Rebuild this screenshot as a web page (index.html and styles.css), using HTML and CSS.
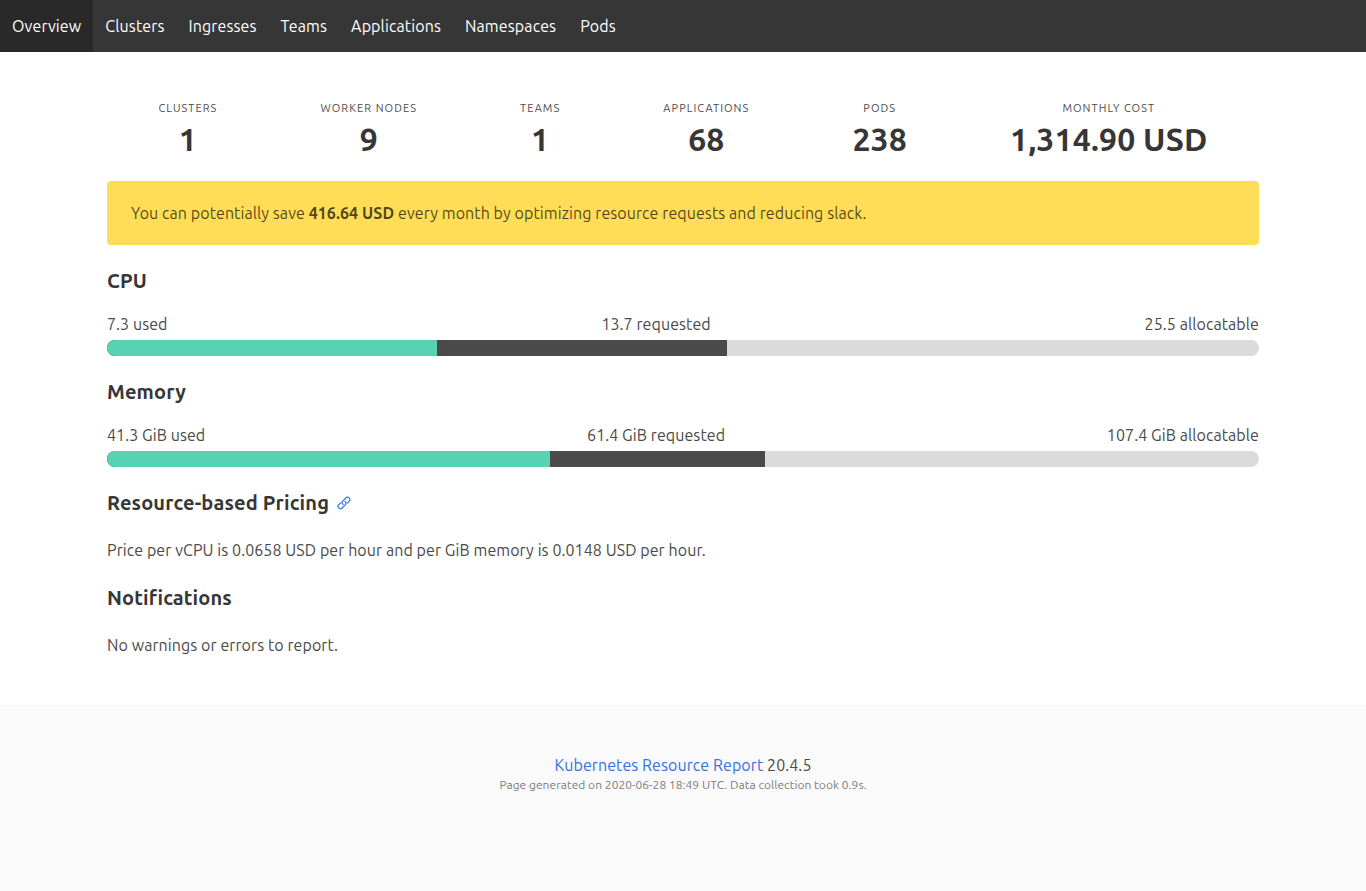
FILE: index.html
```html
<!DOCTYPE html>
<html lang="en">
<head>
<meta charset="utf-8">
<title>Kubernetes Resource Report</title>
<link rel="stylesheet" href="styles.css">
</head>
<body>
<nav class="navbar">
  <a class="navbar-item is-active">Overview</a>
  <a class="navbar-item">Clusters</a>
  <a class="navbar-item">Ingresses</a>
  <a class="navbar-item">Teams</a>
  <a class="navbar-item">Applications</a>
  <a class="navbar-item">Namespaces</a>
  <a class="navbar-item">Pods</a>
</nav>
<main class="section">
  <div class="container">
    <div class="level">
      <div class="level-item"><div><p class="heading">Clusters</p><p class="figure">1</p></div></div>
      <div class="level-item"><div><p class="heading">Worker Nodes</p><p class="figure">9</p></div></div>
      <div class="level-item"><div><p class="heading">Teams</p><p class="figure">1</p></div></div>
      <div class="level-item"><div><p class="heading">Applications</p><p class="figure">68</p></div></div>
      <div class="level-item"><div><p class="heading">Pods</p><p class="figure">238</p></div></div>
      <div class="level-item"><div><p class="heading">Monthly Cost</p><p class="figure">1,314.90 USD</p></div></div>
    </div>
    <div class="notification">You can potentially save <strong>416.64 USD</strong> every month by optimizing resource requests and reducing slack.</div>

    <h2 class="title">CPU</h2>
    <div class="labels"><span>7.3 used</span><span>13.7 requested</span><span>25.5 allocatable</span></div>
    <div class="bar"><div class="bar-requested" style="width:620px"><div class="bar-used" style="width:330px"></div></div></div>

    <h2 class="title">Memory</h2>
    <div class="labels"><span>41.3 GiB used</span><span>61.4 GiB requested</span><span>107.4 GiB allocatable</span></div>
    <div class="bar"><div class="bar-requested" style="width:658px"><div class="bar-used" style="width:443px"></div></div></div>

    <h2 class="title title-text">Resource-based Pricing<a class="link-icon"><svg viewBox="0 0 14 14" width="14" height="14"><path d="M6.100 8.700C4.900 7.500 4.900 6 6 4.900l2.800-2.900c1-1 2.500-1 3.400-.1.9.9.9 2.400 0 3.400l-1.900 1.900M7.900 5.300c1.200 1.200 1.200 2.700.1 3.800l-2.800 2.900c-1 1-2.500 1-3.400.1-.9-.9-.9-2.400 0-3.400l1.900-1.900"/></svg></a></h2>
    <p class="para">Price per vCPU is 0.0658 USD per hour and per GiB memory is 0.0148 USD per hour.</p>

    <h2 class="title title-text">Notifications</h2>
    <p class="para">No warnings or errors to report.</p>
  </div>
</main>
<footer class="footer">
  <p><a class="footer-link">Kubernetes Resource Report</a> 20.4.5</p>
  <p class="generated">Page generated on 2020-06-28 18:49 UTC. Data collection took 0.9s.</p>
</footer>
</body>
</html>
```
FILE: styles.css
```css
* { box-sizing: border-box; }
html, body, p, h2 { margin: 0; padding: 0; }
body {
  display: flex;
  flex-direction: column;
  min-height: 100vh;
  background: #fff;
  color: #4a4a4a;
  font-family: Ubuntu, "Noto Sans", sans-serif;
  font-size: 16px;
  line-height: 24px;
  letter-spacing: .08px;
}
.navbar { display: flex; height: 52px; background: #363636; letter-spacing: .12px; }
.navbar-item { display: flex; align-items: center; padding: 0 12px; color: #fff; white-space: nowrap; }
.navbar-item.is-active { background: #292929; }

.section { padding: 48px 0; }
.container { width: 1152px; margin: 0 auto; }
.level { display: flex; margin-bottom: 24px; height: 57px; }
.level-item { display: flex; flex: 1 0 auto; justify-content: center; text-align: center; }
.heading { margin-bottom: 4px; font-size: 11px; line-height: 16.5px; letter-spacing: 1.05px; text-transform: uppercase; }
.figure { color: #363636; font-size: 32px; font-weight: 600; line-height: 36px; letter-spacing: .15px; }

.notification { padding: 20px 24px; margin-bottom: 24px; border-radius: 4px; background: #ffdd57; color: rgba(0, 0, 0, .7); }

.title { display: flex; align-items: center; margin-bottom: 20px; height: 23px; color: #363636; font-size: 20px; font-weight: 600; line-height: 23px; letter-spacing: .15px; }
.title-text { margin-bottom: 24px; }
.link-icon { display: flex; margin-left: 8px; }
.link-icon svg { fill: none; stroke: #3273dc; stroke-width: 1.2; stroke-linecap: round; }

.labels { display: flex; justify-content: space-between; margin-bottom: 4px; }
.bar { height: 16px; margin-bottom: 24px; border-radius: 8px; background: #dbdbdb; }
.bar-requested { height: 16px; border-radius: 8px 0 0 8px; background: #4a4a4a; }
.bar-used { height: 16px; border-radius: 8px 0 0 8px; background: #57d2b3; }
.para { margin-bottom: 24px; }
.para:last-child { margin-bottom: 0; }

.footer { flex: 1; padding: 48px 24px; background: #fafafa; text-align: center; }
.footer-link { color: #3273dc; }
.generated { color: #7a7a7a; font-size: 12px; line-height: 16px; letter-spacing: .03px; }
```
